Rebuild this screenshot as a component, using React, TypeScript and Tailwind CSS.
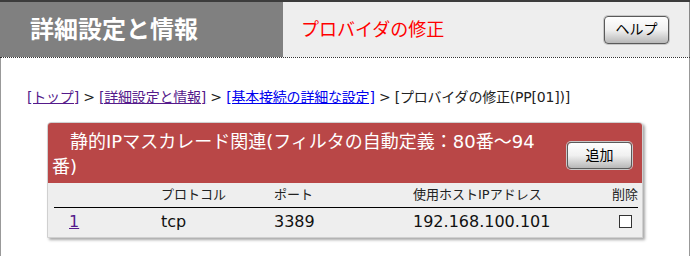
export default function App() {
  return (
    <div className="w-[690px] h-[256px] overflow-hidden bg-white font-['DejaVu_Sans','Noto_Sans_CJK_JP',sans-serif]">
      <div className="border-t-2 border-[#3c3c3c]">
        {/* ヘッダー */}
        <header className="flex h-[56px] border-b border-dotted border-[#333]">
          <div className="w-[283px] bg-[#808080] flex items-center pl-[30px] text-white font-bold text-[24px] leading-none">
            詳細設定と情報
          </div>
          <div className="flex-1 bg-[#eeeeee] flex items-center pl-[18px] pr-[20px] border-r border-[#888]">
            <span className="text-[18px] text-[#ff0000]">プロバイダの修正</span>
            <GradButton label="ヘルプ" className="ml-auto w-[65px] h-[28px]" />
          </div>
        </header>

        <main className="h-[200px] border-x border-[#999] pl-[26px] pt-[29px]">
          {/* パンくず */}
          <div className="text-[14px] leading-[20px] tracking-[-0.2px] text-[#222] whitespace-nowrap">
            <a className="text-[#551a8b] underline" href="#">[トップ]</a>
            {' > '}
            <a className="text-[#551a8b] underline" href="#">[詳細設定と情報]</a>
            {' > '}
            <a className="text-[#0000ee] underline" href="#">[基本接続の詳細な設定]</a>
            {' > [プロバイダの修正(PP[01])]'}
          </div>

          {/* 静的IPマスカレード */}
          <section className="mt-[15px] ml-[20px] w-[596px] rounded-t-[4px] bg-[#eeeeee] shadow-[2px_2px_3px_rgba(0,0,0,0.35)] border border-[#d0d0d0]">
            <div className="flex items-start bg-[#b94747] rounded-t-[3px] h-[60px]">
              <div className="w-[490px] pl-[4px] pt-[6px] text-white text-[18px] leading-[25px] indent-[18px]">
                静的IPマスカレード関連(フィルタの自動定義：80番～94番)
              </div>
              <GradButton label="追加" className="ml-auto mr-[10px] mt-[19px] w-[65px] h-[27px]" />
            </div>

            <div className="px-[6px] pr-[4px] pb-[2px]">
              <div className="grid grid-cols-[107px_113px_139px_1fr_26px] h-[25px] items-center text-[13px] text-[#222] border-b border-black">
                <span />
                <span>プロトコル</span>
                <span>ポート</span>
                <span>使用ホストIPアドレス</span>
                <span className="text-center whitespace-nowrap">削除</span>
              </div>
              <div className="grid grid-cols-[107px_113px_139px_1fr_26px] h-[27px] items-center text-[16px] text-[#111]">
                <a className="pl-[15px] text-[#551a8b] underline" href="#">1</a>
                <span>tcp</span>
                <span>3389</span>
                <span>192.168.100.101</span>
                <span className="flex justify-center">
                  <span className="w-[13px] h-[13px] border border-[#333] bg-white" />
                </span>
              </div>
            </div>
          </section>
        </main>
      </div>
    </div>
  );
}

function GradButton({ label, className }: { label: string; className: string }) {
  return (
    <button
      className={
        'flex items-center justify-center rounded-[4px] border border-[#5a5a5a] bg-gradient-to-b from-white via-[#f0f0f0] to-[#b8b8b8] text-[14px] text-black shadow-[0_0_0_1px_#c8c8c8] ' +
        className
      }
    >
      {label}
    </button>
  );
}
